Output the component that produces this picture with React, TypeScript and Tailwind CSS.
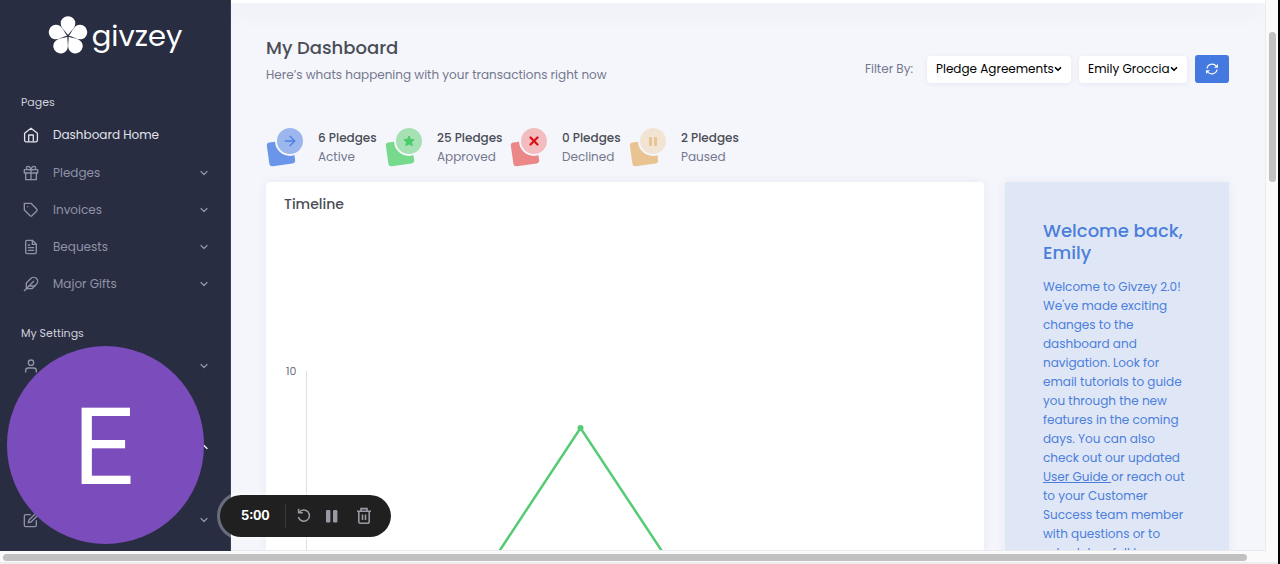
import React from 'react';
import { ChevronDown, ChevronUp, X } from 'lucide-react';
import { FiArrowRight, FiEdit, FiFeather, FiFileText, FiGift, FiTag, FiUser } from 'react-icons/fi';

const pages = [
  { label: 'Pledges', icon: FiGift },
  { label: 'Invoices', icon: FiTag },
  { label: 'Bequests', icon: FiFileText },
  { label: 'Major Gifts', icon: FiFeather },
];

const stats = [
  { count: '6 Pledges', label: 'Active', kind: 'active', square: 'bg-[#6a95e9]', circle: 'bg-[#9bb7ee] text-[#4c7fe2]', width: 'w-[119px]' },
  { count: '25 Pledges', label: 'Approved', kind: 'approved', square: 'bg-[#76d98c]', circle: 'bg-[#a5e1b2] text-[#4ccb6b]', width: 'w-[125px]' },
  { count: '0 Pledges', label: 'Declined', kind: 'declined', square: 'bg-[#ec8787]', circle: 'bg-[#f3bdc0] text-[#d9141c]', width: 'w-[119px]' },
  { count: '2 Pledges', label: 'Paused', kind: 'paused', square: 'bg-[#e9c391]', circle: 'bg-[#f2e4d3] text-[#e9c391]', width: 'w-[119px]' },
];

const welcomeLines = [
  'Welcome to Givzey 2.0!',
  "We've made exciting",
  'changes to the',
  'dashboard and',
  'navigation. Look for',
  'email tutorials to guide',
  'you through the new',
  'features in the coming',
  'days. You can also',
  'check out our updated',
];

function Logo() {
  return (
    <div className="flex items-center justify-center gap-1 h-[44px] text-white">
      <svg viewBox="-20 -20 40 40" className="w-10 h-10 shrink-0" fill="currentColor">
        {[0, 72, 144, 216, 288].map(a => (
          <path key={a} transform={`rotate(${a})`} d="M0 -1C-2 -4.5 -7.3 -8 -7.3 -12.8A7.3 7 0 0 1 7.3 -12.8C7.3 -8 2 -4.5 0 -1Z" />
        ))}
      </svg>
      <span className="text-[29px] leading-10">givzey</span>
    </div>
  );
}

function HomeIcon() {
  return (
    <svg viewBox="0 0 16 16" className="w-4 h-4" fill="none" stroke="currentColor" strokeWidth="1.3" strokeLinejoin="round">
      <path d="M1.6 6.2L8 1.2l6.4 5v7a1.6 1.6 0 0 1-1.6 1.6H3.2a1.6 1.6 0 0 1-1.6-1.6z" />
      <path d="M5.7 14.6V8h4.6v6.6" />
    </svg>
  );
}

function StatIcon({ kind }: { kind: string }) {
  if (kind === 'active') return <FiArrowRight className="w-4 h-4" />;
  if (kind === 'declined') return <X className="w-3.5 h-3.5" strokeWidth={4} />;
  if (kind === 'paused') {
    return (
      <svg viewBox="0 0 14 14" className="w-3.5 h-3.5" fill="currentColor">
        <rect x="3" y="3" width="3" height="9" rx="1" />
        <rect x="8" y="3" width="3" height="9" rx="1" />
      </svg>
    );
  }
  return (
    <svg viewBox="0 0 14 14" className="w-3.5 h-3.5" fill="currentColor" stroke="currentColor" strokeLinejoin="round">
      <path d="M7 2l1.5 3.3 3.6.4-2.7 2.4.8 3.6L7 9.9l-3.2 1.8.8-3.6L1.9 5.7l3.6-.4z" />
    </svg>
  );
}

function NavRow({ icon: Icon, label, name, open }: { icon?: React.ElementType; label?: string; name?: string; open?: boolean }) {
  const Chevron = open ? ChevronUp : ChevronDown;
  return (
    <button aria-label={name} className={`flex items-center w-full h-[37px] pl-[23px] pr-5 text-xs ${open ? 'text-white' : 'text-[#8f93a8]'}`}>
      <span className="w-[30px]">{Icon && <Icon className="w-4 h-4" />}</span>
      <span className="flex-1 text-left">{label}</span>
      <Chevron className="w-3 h-3" strokeWidth={2.5} />
    </button>
  );
}

function Sidebar() {
  return (
    <nav className="w-[231px] shrink-0 bg-[#292d42] border-r border-[#3a3e50] overflow-hidden">
      <div className="pt-[14px]"><Logo /></div>
      <p className="mt-[35px] pl-[21px] text-[11px] leading-[18px] text-[#ced0da]">Pages</p>
      <div className="mt-[5px]">
        <a href="#" className="flex items-center h-[38px] pl-[23px] text-xs text-[#e2e3ea]">
          <span className="w-[30px]"><HomeIcon /></span>
          Dashboard Home
        </a>
        {pages.map(p => <NavRow key={p.label} icon={p.icon} label={p.label} />)}
      </div>
      <p className="mt-[22px] pl-[21px] text-[11px] leading-[18px] text-[#ced0da]">My Settings</p>
      <div className="mt-[5px]">
        <NavRow icon={FiUser} name="Account" />
        <div className="mt-11"><NavRow name="Settings" open /></div>
        <div className="mt-9"><NavRow icon={FiEdit} name="Edit" /></div>
      </div>
    </nav>
  );
}

function Filter({ value, label, className }: { value: string; label: string; className: string }) {
  return (
    <div className={`grid items-center bg-white rounded shadow-[0_1px_5px_rgba(60,70,120,0.08)] ${className}`}>
      <select aria-label={label} className="col-start-1 row-start-1 appearance-none w-full h-[27px] pl-[9px] pr-3 text-xs text-black bg-transparent outline-none">
        <option>{value}</option>
      </select>
      <ChevronDown className="col-start-1 row-start-1 justify-self-end mr-2 w-2.5 h-2.5 text-black pointer-events-none" strokeWidth={4} />
    </div>
  );
}

function Header() {
  return (
    <div className="flex items-center justify-between">
      <div>
        <h1 className="text-lg leading-6 font-medium text-[#4a4d55]">My Dashboard</h1>
        <p className="mt-1 text-xs leading-[22px] text-[#74788d]">Here’s whats happening with your transactions right now</p>
      </div>
      <div className="flex items-center pt-4">
        <span className="mr-[14px] text-xs text-[#74788d]">Filter By:</span>
        <Filter label="Type" value="Pledge Agreements" className="w-[144px] mr-2" />
        <Filter label="User" value="Emily Groccia" className="w-[108px] mr-2" />
        <button aria-label="Refresh" className="flex items-center justify-center w-[34px] h-7 rounded-[3px] bg-[#4479df] text-white">
          <svg viewBox="0 0 16 16" className="w-3.5 h-3.5" fill="none" stroke="currentColor" strokeWidth="1.3">
            <path d="M2.2 7.4A6 6 0 0 1 13 4.9M13.8 8.6A6 6 0 0 1 3 11.1" />
            <path d="M14.8 2.3v4.3h-4.4zM1.2 13.7V9.4h4.4z" fill="currentColor" stroke="none" />
          </svg>
        </button>
      </div>
    </div>
  );
}

function Stats() {
  return (
    <div className="flex">
      {stats.map(s => (
        <div key={s.label} className={`flex items-center shrink-0 ${s.width}`}>
          <div className="relative w-[38px] h-10 shrink-0">
            <div className={`absolute left-[2px] bottom-[2px] w-[26px] h-6 rounded-[3px] -rotate-8 ${s.square}`} />
            <div className={`absolute right-[-1px] top-[-1px] w-[30px] h-[30px] rounded-full border-2 border-[#f5f6fc] flex items-center justify-center ${s.circle}`}>
              <StatIcon kind={s.kind} />
            </div>
          </div>
          <div className="pl-[14px] text-xs leading-[19px] whitespace-nowrap">
            <p className="font-medium text-[#4a4d55]">{s.count}</p>
            <p className="text-[#74788d]">{s.label}</p>
          </div>
        </div>
      ))}
    </div>
  );
}

function Timeline() {
  return (
    <section className="flex-1 min-w-0 bg-white rounded-t shadow-[0_0_10px_rgba(60,70,120,0.07)]">
      <h2 className="pt-3 pl-[18px] text-sm leading-5 font-medium text-[#4a4d55]">Timeline</h2>
      <svg viewBox="0 32 718 400" className="w-full h-auto">
        <text x="20" y="193" fontSize="11" fill="#6e7079">10</text>
        <line x1="40.5" y1="189" x2="40.5" y2="432" stroke="#dfe0e4" />
        <polyline points="191.8,432 314.5,246 437.5,432" fill="none" stroke="#56cb74" strokeWidth="2.5" />
        <circle cx="314.5" cy="246" r="3" fill="#56cb74" />
      </svg>
    </section>
  );
}

function Welcome() {
  return (
    <section className="w-[224px] shrink-0 px-[38px] pt-[38px] bg-[#dfe7f6] text-[#4c7edb] shadow-[0_0_10px_rgba(60,70,120,0.07)]">
      <h2 className="text-lg leading-[22px] font-medium whitespace-nowrap">Welcome back,<br />Emily</h2>
      <p className="mt-[13px] text-xs leading-[19px] whitespace-nowrap">
        {welcomeLines.map(l => <React.Fragment key={l}>{l}<br /></React.Fragment>)}
        <a href="#" className="underline">User Guide </a>or reach out<br />
        to your Customer<br />
        Success team member<br />
        with questions or to<br />
        schedule a full tour
      </p>
    </section>
  );
}

function Recorder() {
  return (
    <div className="absolute left-[217px] bottom-6 flex items-center h-12 pl-[21px] pr-[19px] rounded-full bg-[#202020] bg-clip-padding border-3 border-white/30 text-[#9a98a4]">
      <span className="w-[44px] text-[13px] font-bold text-white font-['Inter',sans-serif] tabular-nums">5:00</span>
      <span className="w-px h-6 bg-[#3a3a3a]" />
      <button aria-label="Restart" className="ml-[10px]">
        <svg viewBox="0 0 16 16" className="w-4 h-4" fill="none" stroke="currentColor" strokeWidth="1.5">
          <path d="M3.2 4.4A5.6 5.6 0 1 1 2.4 9" />
          <path d="M2.6 .8v4h4.2" />
        </svg>
      </button>
      <button aria-label="Pause" className="ml-3">
        <svg viewBox="0 0 16 16" className="w-4 h-4" fill="currentColor">
          <rect x="2" y="2" width="4.4" height="12.5" rx="1.2" />
          <rect x="9" y="2" width="4.4" height="12.5" rx="1.2" />
        </svg>
      </button>
      <button aria-label="Delete" className="ml-4">
        <svg viewBox="0 0 16 18" className="w-4 h-[18px]" fill="none" stroke="currentColor" strokeWidth="1.6">
          <path d="M1 4.2h14M5 4V1.6h6V4M2.8 4.5v10.3a1.5 1.5 0 0 0 1.5 1.5h7.4a1.5 1.5 0 0 0 1.5-1.5V4.5M6.5 7.5v5.5M9.5 7.5v5.5" />
        </svg>
      </button>
    </div>
  );
}

export default function App() {
  return (
    <div className="relative flex flex-col h-screen overflow-hidden bg-[#fafafa] font-['Poppins','Inter',sans-serif]">
      <div className="flex flex-1 min-h-0">
        <Sidebar />
        <main className="flex-1 min-w-0 overflow-hidden bg-[#f5f6fc] border-b border-[#e8e8ee]">
          <div className="h-[3px] bg-white shadow-[0_4px_24px_rgba(40,45,70,0.16)]" />
          <div className="pl-[35px] pr-9 pt-[33px]">
            <Header />
            <div className="mt-[41px]"><Stats /></div>
            <div className="flex gap-[21px] mt-[15px]">
              <Timeline />
              <Welcome />
            </div>
          </div>
        </main>
        <div className="w-[13px] shrink-0 pt-8 px-[3px] border-l border-[#ececef]">
          <div className="h-[150px] w-[7px] rounded-full bg-[#c1c1c1]" />
        </div>
        <div className="w-[2px] shrink-0 bg-black" />
      </div>
      <div className="flex h-[13px] shrink-0">
        <div className="flex-1 pt-[3px] pl-[3px] pr-[31px] border-b-2 border-[#ededed]">
          <div className="h-[7px] rounded-full bg-[#c1c1c1]" />
        </div>
        <div className="w-[2px] bg-black" />
      </div>
      {/* Camera bubble */}
      <div className="absolute left-[7px] bottom-5 flex items-center justify-center w-[197px] h-[198px] pt-1 pr-1 rounded-full bg-[#7b4cbc] text-white text-[108px] leading-none font-['Roboto',sans-serif]">E</div>
      <Recorder />
    </div>
  );
}
